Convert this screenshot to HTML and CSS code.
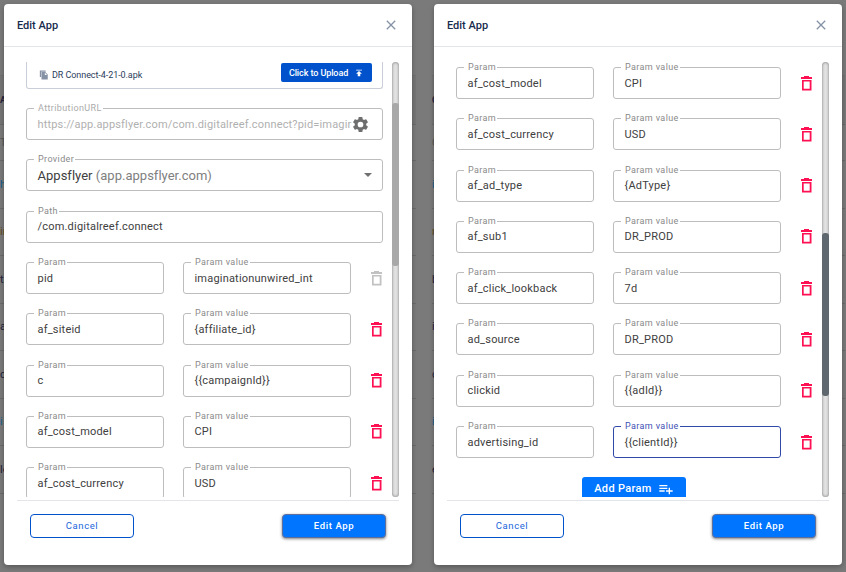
FILE: index.html
```html
<!DOCTYPE html>
<html lang="en">
<head>
<meta charset="utf-8">
<title>Edit App</title>
<link rel="stylesheet" href="styles.css">
</head>
<body>
<svg class="defs" width="0" height="0">
  <symbol id="trash" viewBox="0 0 11 15"><path d="M3 0h5v1h3v2H0V1h3zM1 4h9.500v10.500H1zM2.700 5.600v7.200h6V5.600z" fill-rule="evenodd"/></symbol>
  <symbol id="close" viewBox="0 0 10 10"><path d="M.8.8l8.4 8.4M9.2.8L.8 9.2" fill="none" stroke="currentColor" stroke-width="1.3"/></symbol>
</svg>

<section class="page first">
  <div class="table">
    <div class="tr head"><b>AC</b></div><div class="tr search">TO</div>
    <div class="tr link">h</div><div class="tr gold">in</div><div class="tr">t</div><div class="tr">a</div><div class="tr">c</div><div class="tr link">i</div><div class="tr">le</div><div class="tr last"></div>
  </div>
  <div class="modal">
    <header><h1>Edit App</h1><svg class="x"><use href="#close"/></svg></header>
    <div class="body">
      <div class="scroll">
        <div class="upload">
          <svg class="copy" viewBox="0 0 24 24"><path d="M16 1H2v16h3V4h11V1zm-1 4l6 6v12H6V5h9zm-1 7h5.500L14 6.500V12z"/></svg>
          <span class="file">DR Connect-4-21-0.apk</span>
          <button class="upbtn">Click to Upload<svg viewBox="0 0 24 24"><path d="M5 4v2h14V4H5zm0 10h4v6h6v-6h4l-7-7-7 7z"/></svg></button>
        </div>
        <div class="field off"><label>AttributionURL</label><span class="url">https://app.appsflyer.com/com.digitalreef.connect?pid=imagir</span>
          <svg class="gear" viewBox="0 0 24 24"><path d="M19.140 12.940c.04-.3.060-.61.060-.94 0-.32-.02-.64-.07-.94l2.030-1.580a.49.49 0 0 0 .12-.61l-1.920-3.320a.488.488 0 0 0-.59-.22l-2.390.96c-.5-.38-1.030-.7-1.620-.94l-.36-2.540a.484.484 0 0 0-.48-.41h-3.840c-.24 0-.43.17-.47.41l-.36 2.540c-.59.24-1.130.57-1.620.94l-2.390-.96c-.22-.08-.47 0-.59.22L2.740 8.870c-.12.21-.08.47.12.61l2.030 1.580c-.05.3-.09.63-.09.94s.02.64.07.94l-2.030 1.580a.49.49 0 0 0-.12.61l1.920 3.320c.12.22.37.29.59.22l2.390-.96c.5.38 1.030.7 1.620.94l.36 2.540c.05.24.24.41.48.41h3.840c.24 0 .44-.17.47-.41l.36-2.540c.59-.24 1.130-.56 1.620-.94l2.390.96c.22.08.47 0 .59-.22l1.920-3.320c.12-.22.07-.47-.12-.61l-2.010-1.580zM12 15.600A3.600 3.600 0 1 1 12 8.400a3.600 3.600 0 0 1 0 7.200z"/></svg></div>
        <div class="field select"><label>Provider</label><span>Appsflyer <i>(app.appsflyer.com)</i></span><svg class="caret" viewBox="0 0 8 4"><path d="M0 0h8L4 4z"/></svg></div>
        <div class="field"><label>Path</label><span>/com.digitalreef.connect</span></div>
        <div class="row"><div class="field"><label>Param</label><span>pid</span></div><div class="field"><label>Param value</label><span>imaginationunwired_int</span></div><svg class="bin off"><use href="#trash"/></svg></div>
        <div class="row"><div class="field"><label>Param</label><span>af_siteid</span></div><div class="field"><label>Param value</label><span>{affiliate_id}</span></div><svg class="bin"><use href="#trash"/></svg></div>
        <div class="row"><div class="field"><label>Param</label><span>c</span></div><div class="field"><label>Param value</label><span>{{campaignId}}</span></div><svg class="bin"><use href="#trash"/></svg></div>
        <div class="row"><div class="field"><label>Param</label><span>af_cost_model</span></div><div class="field"><label>Param value</label><span>CPI</span></div><svg class="bin"><use href="#trash"/></svg></div>
        <div class="row"><div class="field"><label>Param</label><span>af_cost_currency</span></div><div class="field"><label>Param value</label><span>USD</span></div><svg class="bin"><use href="#trash"/></svg></div>
      </div>
      <div class="track"><div class="thumb"></div></div>
    </div>
    <footer><button class="cancel">Cancel</button><button class="submit">Edit App</button></footer>
  </div>
</section>

<section class="page second">
  <div class="table">
    <div class="tr head"><b>C</b></div><div class="tr search">C</div>
    <div class="tr link">i</div><div class="tr gold">n</div><div class="tr">b</div><div class="tr">i</div><div class="tr">c</div><div class="tr link">i</div><div class="tr">e</div><div class="tr last"></div>
  </div>
  <div class="modal">
    <header><h1>Edit App</h1><svg class="x"><use href="#close"/></svg></header>
    <div class="body">
      <div class="scroll">
        <div class="row"><div class="field"><label>Param</label><span>af_cost_model</span></div><div class="field"><label>Param value</label><span>CPI</span></div><svg class="bin"><use href="#trash"/></svg></div>
        <div class="row"><div class="field"><label>Param</label><span>af_cost_currency</span></div><div class="field"><label>Param value</label><span>USD</span></div><svg class="bin"><use href="#trash"/></svg></div>
        <div class="row"><div class="field"><label>Param</label><span>af_ad_type</span></div><div class="field"><label>Param value</label><span>{AdType}</span></div><svg class="bin"><use href="#trash"/></svg></div>
        <div class="row"><div class="field"><label>Param</label><span>af_sub1</span></div><div class="field"><label>Param value</label><span>DR_PROD</span></div><svg class="bin"><use href="#trash"/></svg></div>
        <div class="row"><div class="field"><label>Param</label><span>af_click_lookback</span></div><div class="field"><label>Param value</label><span>7d</span></div><svg class="bin"><use href="#trash"/></svg></div>
        <div class="row"><div class="field"><label>Param</label><span>ad_source</span></div><div class="field"><label>Param value</label><span>DR_PROD</span></div><svg class="bin"><use href="#trash"/></svg></div>
        <div class="row"><div class="field"><label>Param</label><span>clickid</span></div><div class="field"><label>Param value</label><span>{{adId}}</span></div><svg class="bin"><use href="#trash"/></svg></div>
        <div class="row"><div class="field"><label>Param</label><span>advertising_id</span></div><div class="field focus"><label>Param value</label><span>{{clientId}}</span></div><svg class="bin"><use href="#trash"/></svg></div>
        <button class="add">Add Param<svg viewBox="0 0 24 24"><path d="M14 10H2v2h12v-2zm0-4H2v2h12V6zm4 8v-4h-2v4h-4v2h4v4h2v-4h4v-2h-4zM2 16h8v-2H2v2z"/></svg></button>
      </div>
      <div class="track"><div class="thumb"></div></div>
    </div>
    <footer><button class="cancel">Cancel</button><button class="submit">Edit App</button></footer>
  </div>
</section>
</body>
</html>
```

FILE: styles.css
```css
* { box-sizing: border-box; }
body {
  margin: 0;
  width: 846px;
  height: 572px;
  overflow: hidden;
  display: flex;
  gap: 16px;
  background: #7a7a7a;
  font-family: Roboto, "Liberation Sans", sans-serif;
}
.defs { position: absolute; }
button { font-family: inherit; padding: 0; }

.page { position: relative; width: 416px; height: 572px; padding: 4px 0 0 4px; flex: none; }
.page.second { width: 414px; padding-left: 2px; }

/* dimmed table behind the dialog */
.table {
  position: absolute;
  inset: 0;
  padding-top: 75px;
  overflow: hidden;
  font-size: 11px;
  color: #22223c;
}
.second .table { right: 1px; }
.tr {
  height: 47.5px;
  display: flex;
  align-items: center;
  border-bottom: 1px solid #6a6a6a;
}
.tr.head { height: 50px; border-top: 1px solid #707070; background: #757575; font-size: 9px; }
.tr.search { height: 36px; color: #555; }
.tr.link { color: #14608c; }
.tr.gold { color: #5e4a1e; }
.tr.last { border: 0; }

.modal {
  position: relative;
  width: 408px;
  height: 561px;
  background: #fff;
  border-radius: 4px;
  box-shadow: 0 2px 5px rgba(0, 0, 0, .28);
}
header {
  height: 43px;
  padding: 0 16px 0 13px;
  display: flex;
  align-items: center;
  justify-content: space-between;
  border-bottom: 1px solid #e3e5ea;
}
h1 { margin: 0; font-size: 11px; font-weight: 500; color: #172b4d; }
.x { width: 10px; height: 10px; color: #8592a6; }

.body { margin-top: 15px; height: 435px; display: flex; }
.scroll { width: 388px; height: 435px; padding-left: 22px; overflow: hidden; }
.second .scroll { padding-top: 5px; }

.upload {
  width: 357px;
  height: 27px;
  margin-bottom: 19.200px;
  padding: 0 10px 0 12px;
  display: flex;
  align-items: flex-start;
  border: 1px solid #c9ced8;
  border-top: 0;
  border-radius: 0 0 3px 3px;
}
.copy { width: 10px; height: 10px; margin-top: 8px; fill: #8592a6; }
.file { margin: 7px auto 0 3px; font-size: 9px; line-height: 13px; letter-spacing: -.07px; color: #2b3d5c; }
.upbtn {
  width: 91px;
  height: 19px;
  margin-top: 1px;
  display: flex;
  align-items: center;
  justify-content: center;
  gap: 6px;
  border: 0;
  border-radius: 2px;
  background: #0052cc;
  color: #fff;
  font-size: 9px;
  font-weight: 500;
  letter-spacing: -.09px;
}
.upbtn svg { width: 10px; height: 10px; margin-top: 1px; fill: #fff; }

.field {
  position: relative;
  width: 357px;
  height: 32px;
  margin-bottom: 19.300px;
  padding: 0 10px 0 10.500px;
  display: flex;
  align-items: center;
  border: 1px solid #bdbdbd;
  border-radius: 3px;
  font-size: 11px;
  letter-spacing: .2px;
  color: #404040;
  white-space: nowrap;
}
.field label {
  position: absolute;
  left: 7px;
  top: -7px;
  padding: 0 1px 0 4px;
  background: #fff;
  font-size: 9px;
  line-height: 12px;
  letter-spacing: .38px;
  color: #8a8a8a;
}
.field.off { justify-content: space-between; padding-right: 12px; color: #b0b0b0; letter-spacing: .17px; }
.field.off label { color: #ababab; }
.gear { width: 19px; height: 19px; flex: none; fill: #6e6e6e; }
.select { font-size: 13px; letter-spacing: .02px; justify-content: space-between; }
.select i { font-style: normal; color: #808080; }
.caret { width: 8px; height: 4px; fill: #707070; }

.row { display: flex; margin-bottom: 19.300px; }
.row .field { width: 138px; margin: 0 19px 0 0; }
.row .field + .field { width: 168px; margin-right: 20px; }
.bin { width: 11px; height: 15px; margin-top: 8.500px; fill: #ff1053; }
.bin.off { fill: #c2c2c2; }
.row .focus { border-color: #3049a8; }
.field.focus label { color: #3f51b5; }

.add {
  width: 104px;
  height: 23px;
  margin: 0 0 0 126px;
  display: flex;
  align-items: center;
  justify-content: center;
  gap: 6px;
  border: 0;
  border-radius: 3px;
  background: #0075ff;
  color: #fff;
  font-size: 11px;
  font-weight: 500;
  letter-spacing: .34px;
}
.add svg { width: 16px; height: 16px; fill: #fff; }

.track {
  width: 7px;
  height: 435px;
  overflow: hidden;
  border-radius: 4px;
  background: #e2e2e2;
  box-shadow: inset 0 0 3px rgba(0, 0, 0, .5);
}
.thumb { margin-top: 41px; height: 163px; border-radius: 3px; background: #a8a8a8; }
.second .thumb { margin-top: 171px; background: #5f686e; }

footer {
  margin: 3px 13px 0;
  padding: 13px 13px 0;
  display: flex;
  justify-content: space-between;
  border-top: 1px solid #e3e5ea;
}
.cancel, .submit {
  width: 104px;
  height: 24px;
  padding-bottom: 1px;
  border-radius: 4px;
  font-size: 9.500px;
  letter-spacing: .6px;
}
.cancel { border: 1px solid #0052cc; background: #fff; color: #1a66dc; }
.submit {
  border: 1px solid #5f6f9c;
  background: #0075ff;
  color: #fff;
  font-weight: 500;
  box-shadow: 0 1px 3px rgba(0, 0, 0, .5);
}
```
